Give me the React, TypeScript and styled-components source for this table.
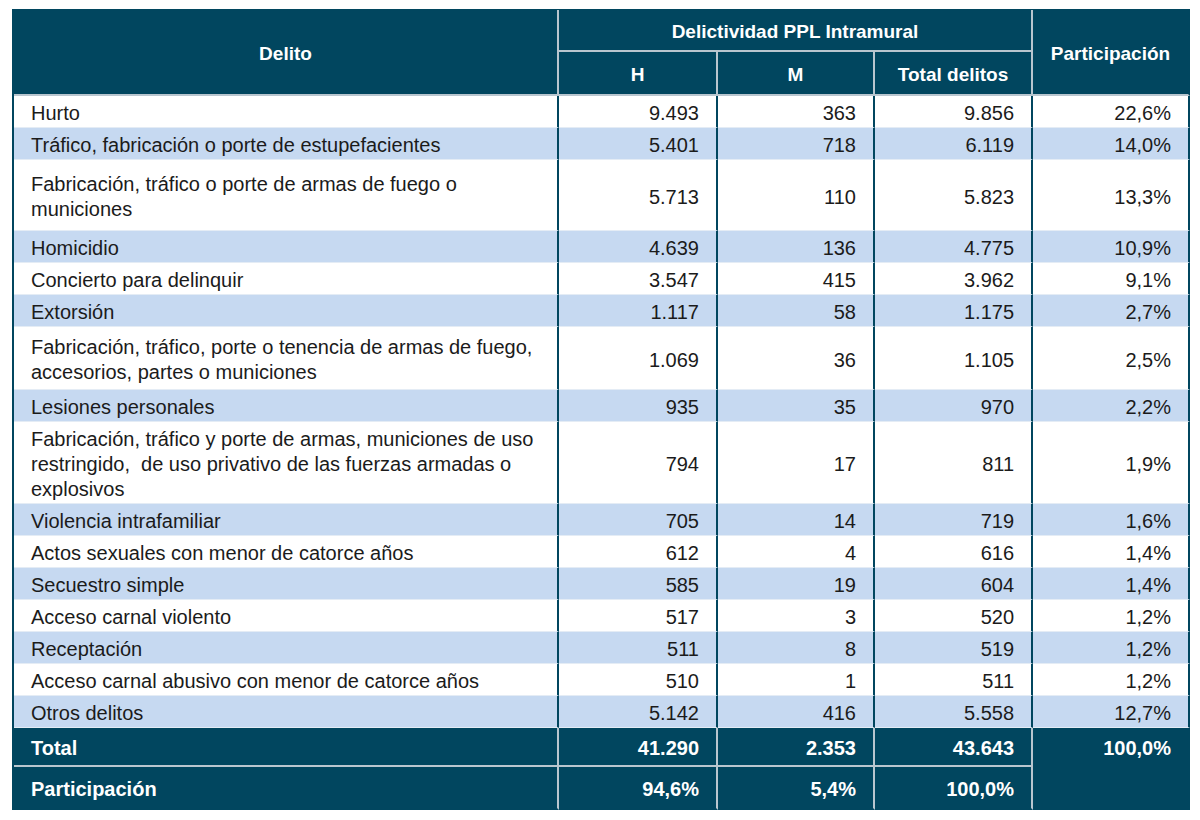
import React from "react";
import styled, { createGlobalStyle } from "styled-components";

const DARK = "#01465f";
const BAND = "#c6d9f1";
const LIGHT_LINE = "#b9c6cf";

const Global = createGlobalStyle`
  html, body { margin: 0; padding: 0; background: #ffffff; }
  body { font-family: "Liberation Sans", Arial, sans-serif; }
`;

const Page = styled.div`
  padding: 9px 12px 0 12px;
`;

const Table = styled.table`
  border-collapse: separate;
  border-spacing: 0;
  table-layout: fixed;
  width: 1176px;
  border-top: 1px solid ${DARK};
  border-left: 2px solid ${DARK};
  font-family: "Liberation Sans", Arial, sans-serif;
`;

const Th = styled.th<{ $last?: boolean }>`
  background: ${DARK};
  color: #ffffff;
  font-weight: bold;
  font-size: 19px;
  line-height: 22px;
  text-align: center;
  vertical-align: middle;
  padding: 4px 6px 0 6px;
  border-right: 2px solid ${(p) => (p.$last ? DARK : LIGHT_LINE)};
  border-bottom: 2px solid ${LIGHT_LINE};
`;

const HeadRow = styled.tr<{ $h: number }>`
  height: ${(p) => p.$h}px;
`;

const BodyRow = styled.tr<{ $h: number; $band: boolean }>`
  height: ${(p) => p.$h}px;
  background: ${(p) => (p.$band ? BAND : "#ffffff")};
`;

const Label = styled.td`
  font-size: 20px;
  line-height: 25px;
  color: #1b1b1b;
  padding: 4px 6px 0 17px;
  vertical-align: middle;
  border-right: 2px solid ${DARK};
  border-bottom: 1px solid #e4ecf5;
`;

const Line = styled.span`
  display: block;
  white-space: pre;
`;

const Num = styled.td`
  font-size: 20px;
  line-height: 25px;
  color: #1b1b1b;
  text-align: right;
  padding: 4px 17px 0 6px;
  vertical-align: middle;
  border-right: 2px solid ${DARK};
  border-bottom: 1px solid #e4ecf5;
`;

const FootRow = styled.tr<{ $h: number }>`
  height: ${(p) => p.$h}px;
  background: ${DARK};
`;

const FootLabel = styled.td<{ $bottom?: boolean }>`
  color: #ffffff;
  font-weight: bold;
  font-size: 20px;
  line-height: 25px;
  padding: 4px 6px 0 17px;
  vertical-align: middle;
  border-right: 2px solid ${LIGHT_LINE};
  border-bottom: 2px solid ${(p) => (p.$bottom ? DARK : LIGHT_LINE)};
`;

const FootNum = styled.td<{ $bottom?: boolean }>`
  color: #ffffff;
  font-weight: bold;
  font-size: 20px;
  line-height: 25px;
  text-align: right;
  padding: 4px 17px 0 6px;
  vertical-align: middle;
  border-right: 2px solid ${LIGHT_LINE};
  border-bottom: 2px solid ${(p) => (p.$bottom ? DARK : LIGHT_LINE)};
`;

const FootShare = styled.td`
  color: #ffffff;
  font-weight: bold;
  font-size: 20px;
  line-height: 25px;
  text-align: right;
  padding: 8px 17px 0 6px;
  vertical-align: top;
  border-right: 2px solid ${DARK};
  border-bottom: 2px solid ${DARK};
`;

type Row = { lines: string[]; h: string; m: string; t: string; p: string; height: number };

const rows: Row[] = [
  { lines: ["Hurto"], h: "9.493", m: "363", t: "9.856", p: "22,6%", height: 32 },
  { lines: ["Tráfico, fabricación o porte de estupefacientes"], h: "5.401", m: "718", t: "6.119", p: "14,0%", height: 32 },
  { lines: ["Fabricación, tráfico o porte de armas de fuego o", "municiones"], h: "5.713", m: "110", t: "5.823", p: "13,3%", height: 71 },
  { lines: ["Homicidio"], h: "4.639", m: "136", t: "4.775", p: "10,9%", height: 32 },
  { lines: ["Concierto para delinquir"], h: "3.547", m: "415", t: "3.962", p: "9,1%", height: 32 },
  { lines: ["Extorsión"], h: "1.117", m: "58", t: "1.175", p: "2,7%", height: 32 },
  { lines: ["Fabricación, tráfico, porte o tenencia de armas de fuego,", "accesorios, partes o municiones"], h: "1.069", m: "36", t: "1.105", p: "2,5%", height: 63 },
  { lines: ["Lesiones personales"], h: "935", m: "35", t: "970", p: "2,2%", height: 32 },
  { lines: ["Fabricación, tráfico y porte de armas, municiones de uso", "restringido,  de uso privativo de las fuerzas armadas o", "explosivos"], h: "794", m: "17", t: "811", p: "1,9%", height: 82 },
  { lines: ["Violencia intrafamiliar"], h: "705", m: "14", t: "719", p: "1,6%", height: 32 },
  { lines: ["Actos sexuales con menor de catorce años"], h: "612", m: "4", t: "616", p: "1,4%", height: 32 },
  { lines: ["Secuestro simple"], h: "585", m: "19", t: "604", p: "1,4%", height: 32 },
  { lines: ["Acceso carnal violento"], h: "517", m: "3", t: "520", p: "1,2%", height: 32 },
  { lines: ["Receptación"], h: "511", m: "8", t: "519", p: "1,2%", height: 32 },
  { lines: ["Acceso carnal abusivo con menor de catorce años"], h: "510", m: "1", t: "511", p: "1,2%", height: 32 },
  { lines: ["Otros delitos"], h: "5.142", m: "416", t: "5.558", p: "12,7%", height: 32 },
];

export default function App() {
  return (
    <>
      <Global />
      <Page>
        <Table>
          <colgroup>
            <col style={{ width: 545 }} />
            <col style={{ width: 159 }} />
            <col style={{ width: 157 }} />
            <col style={{ width: 158 }} />
            <col style={{ width: 157 }} />
          </colgroup>
          <thead>
            <HeadRow $h={42}>
              <Th rowSpan={2}>Delito</Th>
              <Th colSpan={3}>Delictividad PPL Intramural</Th>
              <Th rowSpan={2} $last>
                Participación
              </Th>
            </HeadRow>
            <HeadRow $h={44}>
              <Th>H</Th>
              <Th>M</Th>
              <Th>Total delitos</Th>
            </HeadRow>
          </thead>
          <tbody>
            {rows.map((r, i) => (
              <BodyRow key={i} $h={r.height} $band={i % 2 === 1}>
                <Label>
                  {r.lines.map((l, j) => (
                    <Line key={j}>{l}</Line>
                  ))}
                </Label>
                <Num>{r.h}</Num>
                <Num>{r.m}</Num>
                <Num>{r.t}</Num>
                <Num>{r.p}</Num>
              </BodyRow>
            ))}
          </tbody>
          <tfoot>
            <FootRow $h={39}>
              <FootLabel>Total</FootLabel>
              <FootNum>41.290</FootNum>
              <FootNum>2.353</FootNum>
              <FootNum>43.643</FootNum>
              <FootShare rowSpan={2}>100,0%</FootShare>
            </FootRow>
            <FootRow $h={43}>
              <FootLabel $bottom>Participación</FootLabel>
              <FootNum $bottom>94,6%</FootNum>
              <FootNum $bottom>5,4%</FootNum>
              <FootNum $bottom>100,0%</FootNum>
            </FootRow>
          </tfoot>
        </Table>
      </Page>
    </>
  );
}
